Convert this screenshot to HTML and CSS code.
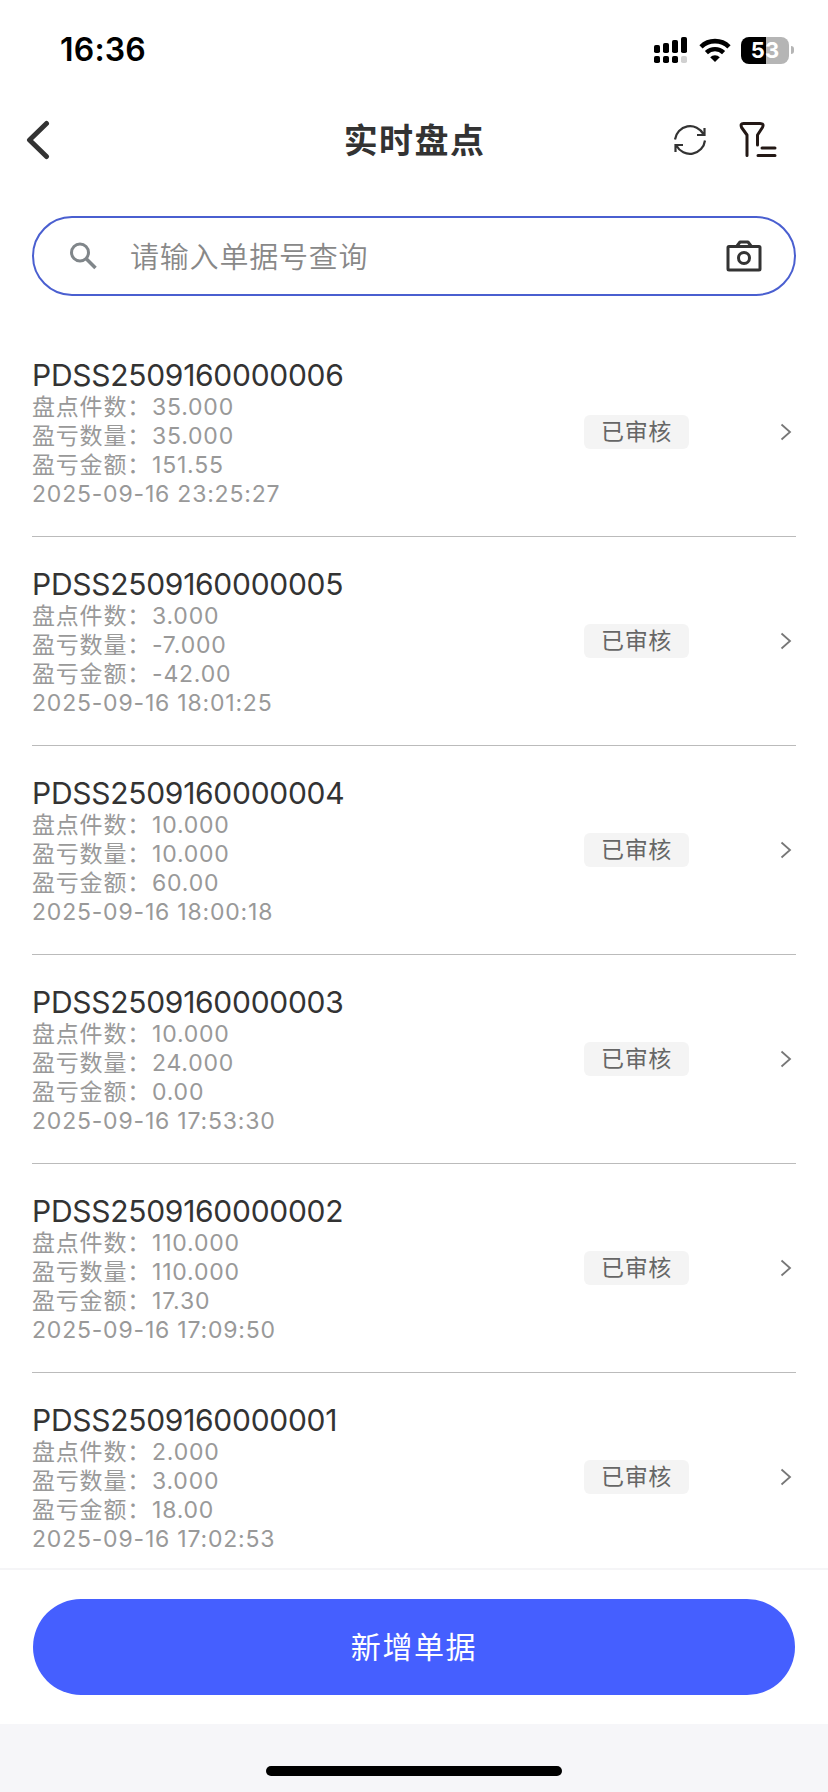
FILE: index.html
```html
<!DOCTYPE html>
<html lang="zh-CN">
<head>
    <meta charset="UTF-8">
    <meta name="viewport" content="width=device-width, initial-scale=1.0">
    <title>实时盘点</title>
    <link rel="stylesheet" href="styles.css">
</head>
<body>

    <div class="status-bar">
        <span class="time">16:36</span>
        <div class="status-icons">
            <svg class="signal" width="33" height="26" viewBox="0 0 33 26">
                <rect x="0" y="8" width="6" height="8" rx="1.8"/>
                <rect x="9" y="6" width="6" height="10" rx="1.8"/>
                <rect x="18" y="3" width="6" height="13" rx="1.8"/>
                <rect x="27" y="0" width="6" height="16" rx="1.8"/>
                <rect x="0" y="19" width="6" height="7" rx="1.8"/>
                <rect x="9" y="19" width="6" height="7" rx="1.8"/>
                <rect x="18" y="19" width="6" height="7" rx="1.8"/>
                <rect x="27" y="19" width="6" height="7" rx="1.8" fill="#d0d0d0"/>
            </svg>
            <svg class="wifi" width="32" height="24" viewBox="0 0 32 24">
                <path d="M2 8.8a20 20 0 0 1 28 0" fill="none" stroke="#000" stroke-width="4.6"/>
                <path d="M7.4 14.6a12.3 12.3 0 0 1 17.2 0" fill="none" stroke="#000" stroke-width="4.4"/>
                <path d="M16 24l-4.8-4.8a6.8 6.8 0 0 1 9.6 0z"/>
            </svg>
            <div class="battery"><span>53</span></div>
        </div>
    </div>

    <div class="nav">
        <svg class="back" width="24" height="40" viewBox="0 0 24 40">
            <path d="M20.5 3.5L3.5 20l17 16.5" fill="none" stroke="#333" stroke-width="5" stroke-linecap="round" stroke-linejoin="round"/>
        </svg>
        <h1>实时盘点</h1>
        <div class="nav-actions">
            <svg width="34" height="34" viewBox="0 0 34 34" fill="none" stroke="#333" stroke-width="2.2">
                <path d="M2 16.5A15.2 15.2 0 0 1 30.5 11.2M31.5 5v7h-7.500"/>
                <path d="M32 17.5A15.2 15.2 0 0 1 3.5 22.8M2.500 29v-7H10"/>
            </svg>
            <svg width="38" height="36" viewBox="0 0 38 36" fill="none" stroke="#231815" stroke-width="3" stroke-linecap="round" stroke-linejoin="round">
                <path d="M8 33.5V13L2.600 5.500Q1 1.500 4.500 1.500h16.500Q25.500 1.500 23.400 5.500L18.500 13v10"/>
                <path d="M23 26h13M19 33.500h17"/>
            </svg>
        </div>
    </div>

    <div class="search">
        <svg width="28" height="28" viewBox="0 0 28 28" fill="none" stroke="#80868a" stroke-width="3">
            <circle cx="10" cy="10.5" r="8.5"/>
            <path d="M16 16.500l9.500 9.500" stroke-width="3.600"/>
        </svg>
        <input type="text" placeholder="请输入单据号查询">
        <svg width="36" height="32" viewBox="0 0 36 32" fill="none" stroke="#333" stroke-width="3" stroke-linejoin="round">
            <rect x="2" y="6.5" width="32" height="23.5" rx="1"/>
            <path d="M11 6l3-4h8l3 4"/>
            <circle cx="18" cy="18" r="5.5"/>
        </svg>
    </div>

    <div class="list">
        <div class="item">
            <div class="info">
                <h2>PDSS2509160000006</h2>
                <p><span>盘点件数：</span>35.000</p>
                <p><span>盈亏数量：</span>35.000</p>
                <p><span>盈亏金额：</span>151.55</p>
                <p>2025-09-16 23:25:27</p>
            </div>
            <span class="tag">已审核</span>
            <svg class="arrow" width="12" height="18" viewBox="0 0 12 18"><path d="M1.500 1.500L10 9l-8.500 7.500"/></svg>
        </div>
        <div class="item">
            <div class="info">
                <h2>PDSS2509160000005</h2>
                <p><span>盘点件数：</span>3.000</p>
                <p><span>盈亏数量：</span>-7.000</p>
                <p><span>盈亏金额：</span>-42.00</p>
                <p>2025-09-16 18:01:25</p>
            </div>
            <span class="tag">已审核</span>
            <svg class="arrow" width="12" height="18" viewBox="0 0 12 18"><path d="M1.500 1.500L10 9l-8.500 7.500"/></svg>
        </div>
        <div class="item">
            <div class="info">
                <h2>PDSS2509160000004</h2>
                <p><span>盘点件数：</span>10.000</p>
                <p><span>盈亏数量：</span>10.000</p>
                <p><span>盈亏金额：</span>60.00</p>
                <p>2025-09-16 18:00:18</p>
            </div>
            <span class="tag">已审核</span>
            <svg class="arrow" width="12" height="18" viewBox="0 0 12 18"><path d="M1.500 1.500L10 9l-8.500 7.500"/></svg>
        </div>
        <div class="item">
            <div class="info">
                <h2>PDSS2509160000003</h2>
                <p><span>盘点件数：</span>10.000</p>
                <p><span>盈亏数量：</span>24.000</p>
                <p><span>盈亏金额：</span>0.00</p>
                <p>2025-09-16 17:53:30</p>
            </div>
            <span class="tag">已审核</span>
            <svg class="arrow" width="12" height="18" viewBox="0 0 12 18"><path d="M1.500 1.500L10 9l-8.500 7.500"/></svg>
        </div>
        <div class="item">
            <div class="info">
                <h2>PDSS2509160000002</h2>
                <p><span>盘点件数：</span>110.000</p>
                <p><span>盈亏数量：</span>110.000</p>
                <p><span>盈亏金额：</span>17.30</p>
                <p>2025-09-16 17:09:50</p>
            </div>
            <span class="tag">已审核</span>
            <svg class="arrow" width="12" height="18" viewBox="0 0 12 18"><path d="M1.500 1.500L10 9l-8.500 7.500"/></svg>
        </div>
        <div class="item">
            <div class="info">
                <h2>PDSS2509160000001</h2>
                <p><span>盘点件数：</span>2.000</p>
                <p><span>盈亏数量：</span>3.000</p>
                <p><span>盈亏金额：</span>18.00</p>
                <p>2025-09-16 17:02:53</p>
            </div>
            <span class="tag">已审核</span>
            <svg class="arrow" width="12" height="18" viewBox="0 0 12 18"><path d="M1.500 1.500L10 9l-8.500 7.500"/></svg>
        </div>
    </div>

    <div class="footer">
        <button>新增单据</button>
    </div>
    <div class="home-area">
        <div class="home-indicator"></div>
    </div>

</body>
</html>
```

FILE: styles.css
```css
* {
    box-sizing: border-box;
}
body {
    font-family: Inter, "Noto Sans CJK SC", sans-serif;
    display: flex;
    flex-direction: column;
    height: 100vh;
    margin: 0;
    overflow: hidden;
    background-color: #fff;
    color: #333;
}
h1, h2, p {
    margin: 0;
}
svg {
    display: block;
    flex-shrink: 0;
}

/* status bar */
.status-bar {
    display: flex;
    justify-content: space-between;
    align-items: center;
    height: 100px;
    padding: 0 34px 0 60px;
    color: #000;
}
.time {
    font-size: 32px;
    font-weight: 600;
    line-height: 40px;
    letter-spacing: 0.2px;
}
.status-icons {
    display: flex;
    align-items: center;
}
.wifi {
    margin: 0 10px 0 12px;
}
.battery {
    display: flex;
    align-items: center;
}
.battery span {
    width: 48px;
    height: 27px;
    border-radius: 8px;
    background: linear-gradient(to right, #000 52%, #b5b5b5 52%);
    color: #fff;
    font-size: 22px;
    font-weight: 700;
    line-height: 27px;
    text-align: center;
}
.battery::after {
    content: "";
    width: 3px;
    height: 8px;
    margin-left: 2px;
    border-radius: 0 3px 3px 0;
    background: #b5b5b5;
}

/* title bar */
.nav {
    display: grid;
    grid-template-columns: 1fr auto 1fr;
    align-items: center;
    height: 80px;
    padding: 0 51px 0 26px;
}
.nav h1 {
    padding: 1px 0 0 26px;
    font-size: 34px;
    font-weight: 700;
    line-height: 48px;
    letter-spacing: 1.4px;
}
.nav-actions {
    display: flex;
    align-items: center;
    justify-content: flex-end;
    gap: 32px;
}

/* search */
.search {
    display: flex;
    align-items: center;
    flex-shrink: 0;
    height: 80px;
    margin: 36px 32px 32px;
    padding: 0 32px 0 36px;
    border: 2px solid #4a5fd0;
    border-radius: 40px;
}
.search input {
    flex: 1;
    min-width: 0;
    margin-left: 32px;
    padding: 3px 0 0;
    border: none;
    outline: none;
    background: none;
    font: 350 29px/44px Inter, "Noto Sans CJK SC", sans-serif;
    letter-spacing: 0.8px;
}
.search input::placeholder {
    color: #888;
    opacity: 1;
}

/* list */
.list {
    flex: 1;
    min-height: 0;
    padding: 0 32px;
    overflow: hidden;
}
.item {
    display: flex;
    align-items: center;
    height: 209px;
    border-bottom: 1px solid #bbb;
}
.info {
    flex: 1;
    padding-top: 2px;
}
.info h2 {
    font-size: 30px;
    font-weight: 400;
    line-height: 36px;
    letter-spacing: -0.28px;
}
.info p {
    height: 29px;
    color: #999;
    font-size: 23px;
    line-height: 29px;
    letter-spacing: 0.8px;
}
.info span {
    margin-right: 1px;
}
.tag {
    width: 105px;
    height: 34px;
    border-radius: 6px;
    background: #f4f4f4;
    color: #666;
    font-size: 23px;
    line-height: 35px;
    letter-spacing: 0.6px;
    text-align: center;
}
.arrow {
    margin: 0 4px 0 91px;
    fill: none;
    stroke: #777;
    stroke-width: 1.8;
}

/* footer */
.footer {
    flex-shrink: 0;
    height: 156px;
    padding: 29px 33px 0;
    border-top: 2px solid #f5f5f7;
    background: #fff;
}
.footer button {
    display: block;
    width: 100%;
    height: 96px;
    padding: 0 0 5px;
    border: none;
    border-radius: 48px;
    background-color: #455fff;
    color: #fff;
    font: 400 30px/90px "Noto Sans CJK SC", sans-serif;
    letter-spacing: 1.6px;
}
.home-area {
    flex-shrink: 0;
    height: 68px;
    padding-top: 42px;
    background: #f6f6f9;
}
.home-indicator {
    width: 296px;
    height: 10px;
    margin: 0 auto;
    border-radius: 5px;
    background: #000;
}
```
